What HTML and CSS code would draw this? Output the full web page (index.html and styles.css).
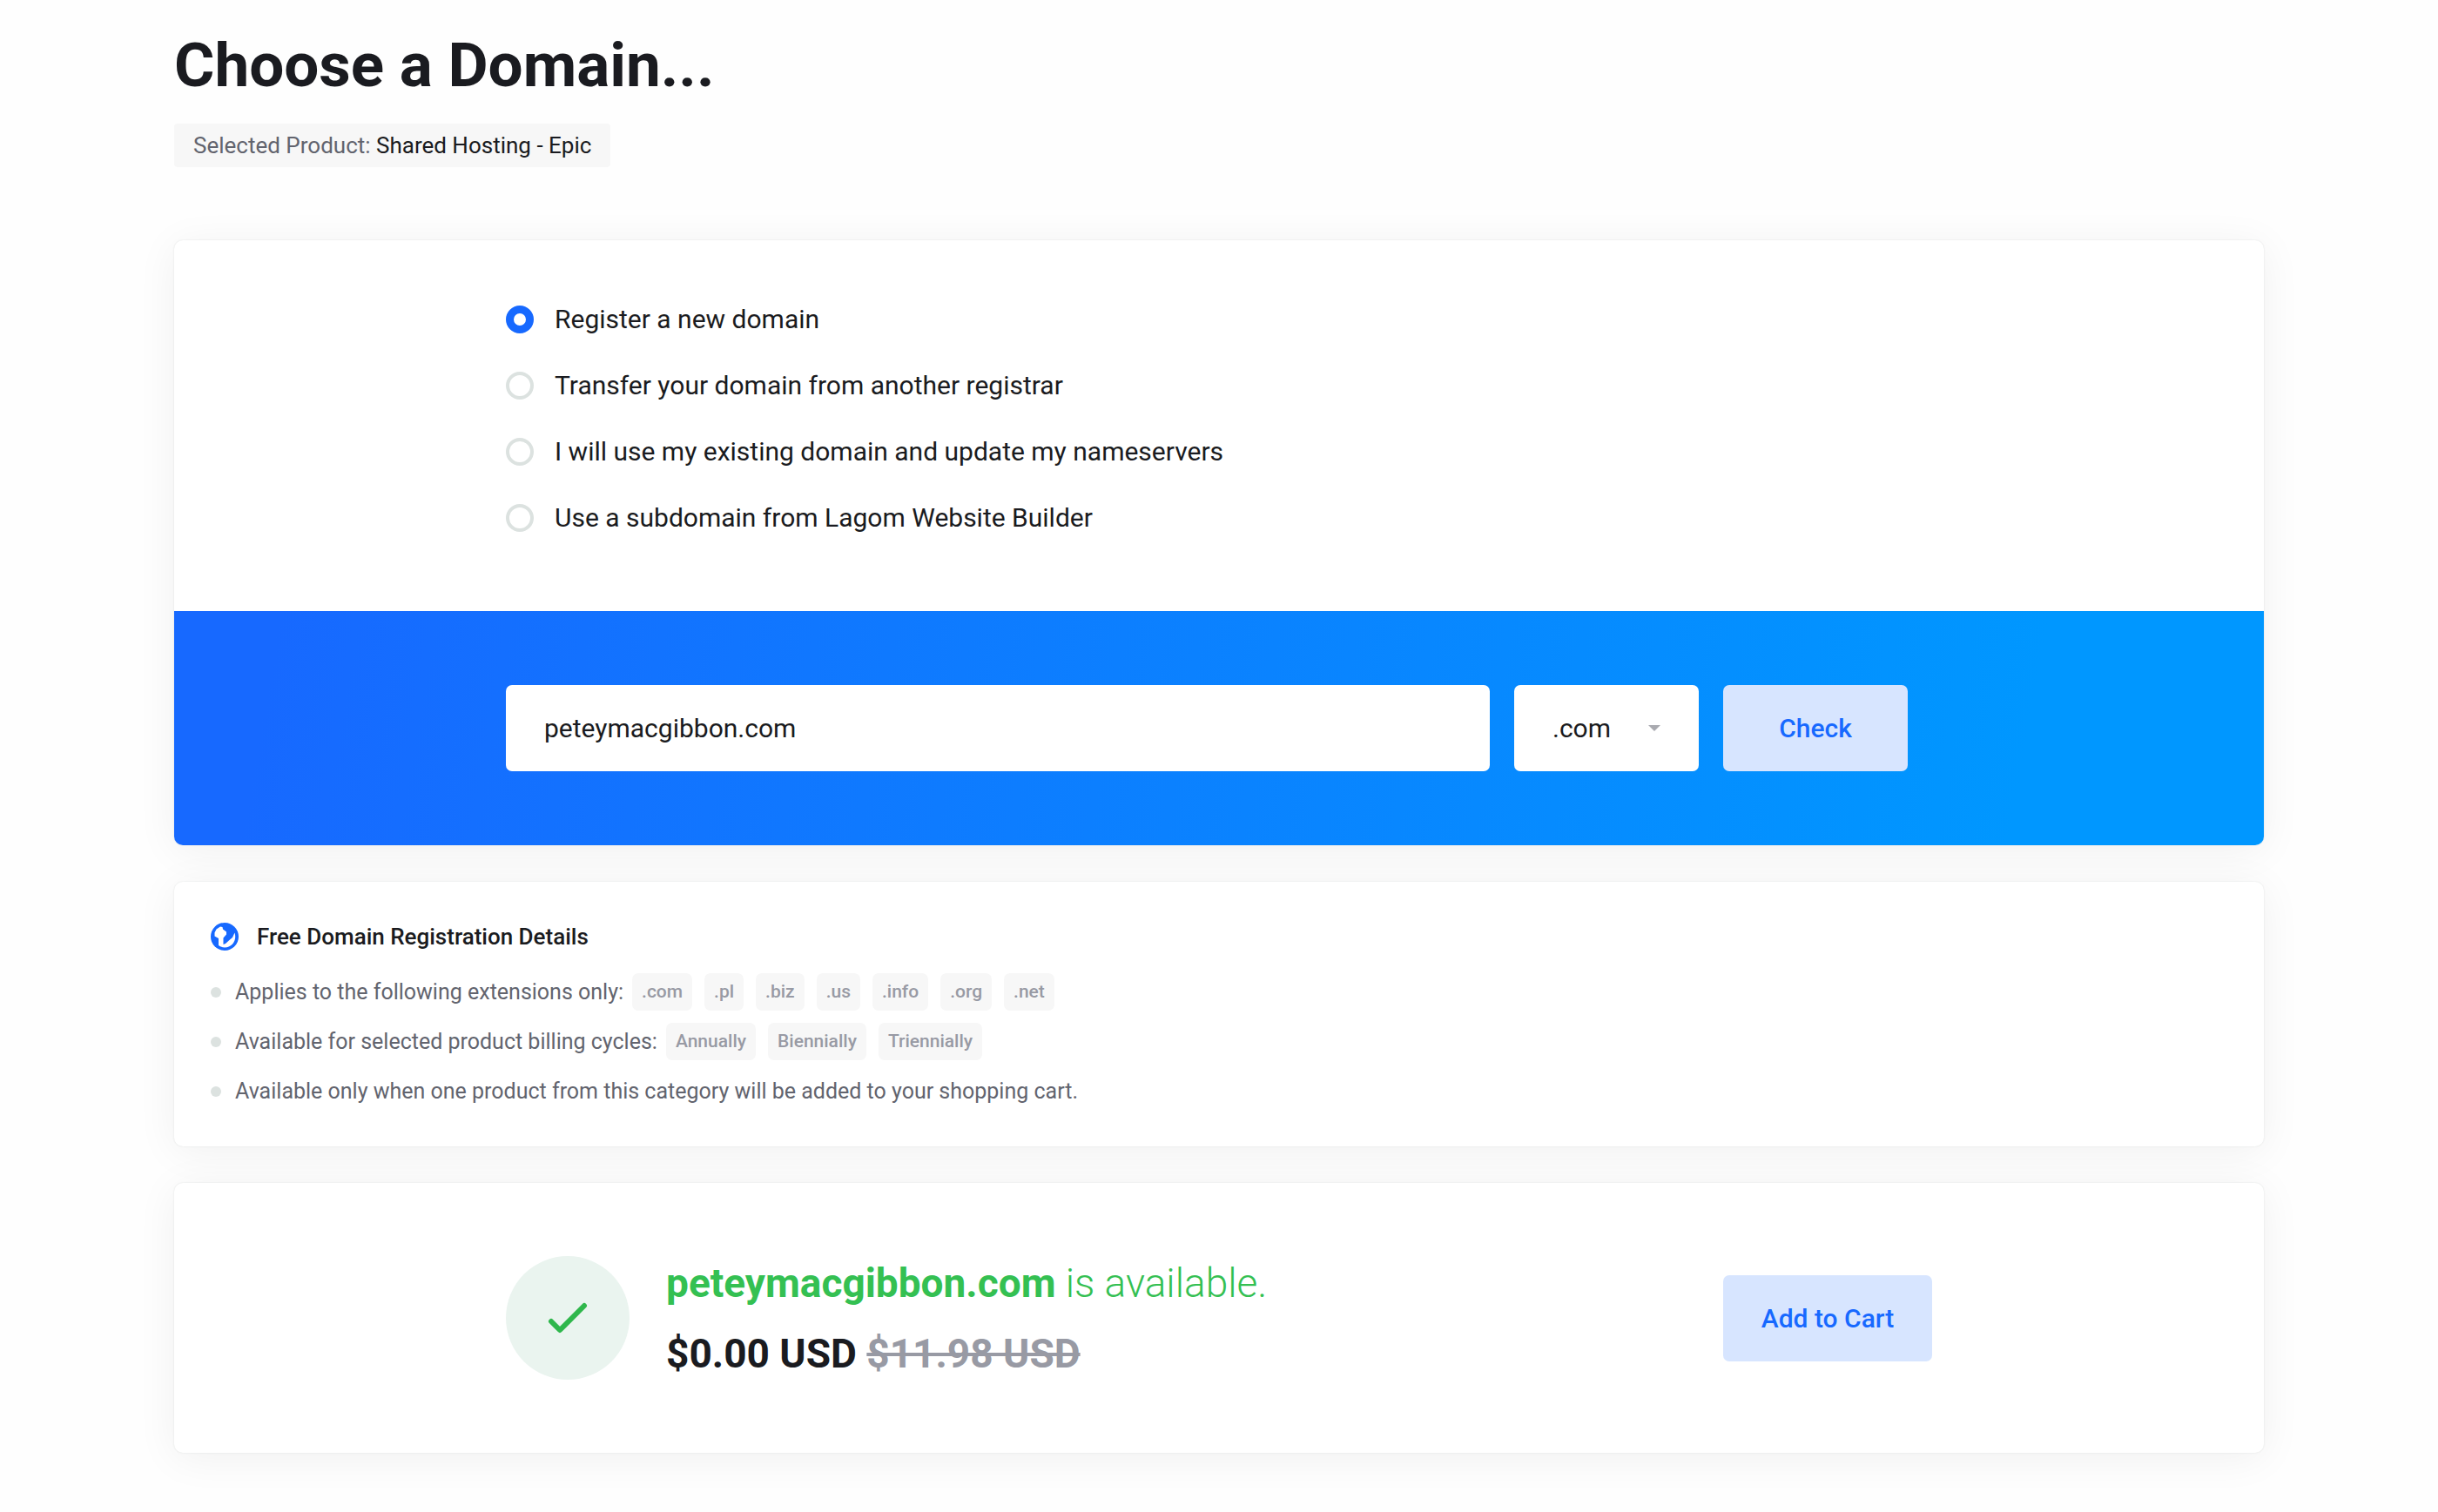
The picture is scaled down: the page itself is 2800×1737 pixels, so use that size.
FILE: index.html
```html
<!DOCTYPE html>
<html lang="en">
<head>
<meta charset="utf-8">
<meta name="viewport" content="width=device-width, initial-scale=1">
<title>Choose a Domain</title>
<link rel="stylesheet" href="styles.css">
</head>
<body>
<main class="page">
  <header class="page-header">
    <h1 class="page-title">Choose a Domain...</h1>
    <p class="product">Selected Product: <span class="product-name">Shared Hosting - Epic</span></p>
  </header>

  <form class="card search">
    <fieldset class="options content">
      <label class="option"><input class="radio" type="radio" name="domain-option" checked>Register a new domain</label>
      <label class="option"><input class="radio" type="radio" name="domain-option">Transfer your domain from another registrar</label>
      <label class="option"><input class="radio" type="radio" name="domain-option">I will use my existing domain and update my nameservers</label>
      <label class="option"><input class="radio" type="radio" name="domain-option">Use a subdomain from Lagom Website Builder</label>
    </fieldset>
    <div class="search-bar">
      <div class="search-row content">
        <input class="field" type="text" name="domain" value="peteymacgibbon.com" aria-label="Domain name">
        <select class="field tld" name="tld" aria-label="Extension">
          <option>.com</option>
        </select>
        <button class="button" type="submit">Check</button>
      </div>
    </div>
  </form>

  <section class="card details">
    <h2 class="details-title">
      <svg class="globe" viewBox="0 0 32 32" aria-hidden="true">
        <circle cx="16" cy="16" r="16" fill="#1769ff"/>
        <path fill="#fff" d="M4.500 11.500L6.500 7.500L11 4.500L13.500 5L14 7.500L18 10.500V13.500L14.500 17.500V25L17 24L22 19.500L25 17L27.500 11.500C30 19 26 28 16 28.500C13 28.500 10 27 9 26V18L4.500 15.500Z"/>
      </svg>
      Free Domain Registration Details
    </h2>
    <ul class="details-list">
      <li class="details-item">Applies to the following extensions only:
        <span class="tags"><span class="tag">.com</span><span class="tag">.pl</span><span class="tag">.biz</span><span class="tag">.us</span><span class="tag">.info</span><span class="tag">.org</span><span class="tag">.net</span></span>
      </li>
      <li class="details-item">Available for selected product billing cycles:
        <span class="tags"><span class="tag">Annually</span><span class="tag">Biennially</span><span class="tag">Triennially</span></span>
      </li>
      <li class="details-item">Available only when one product from this category will be added to your shopping cart.</li>
    </ul>
  </section>

  <section class="card result">
    <div class="result-row content">
      <span class="result-icon">
        <svg class="check" viewBox="0 0 46 36" aria-hidden="true"><path d="M4 22l10 10L42 4" fill="none" stroke="#2fb74c" stroke-width="6" stroke-linecap="round" stroke-linejoin="round"/></svg>
      </span>
      <div class="result-text">
        <p class="availability"><strong>peteymacgibbon.com</strong> is available.</p>
        <p class="price">$0.00 USD <s class="old-price">$11.98 USD</s></p>
      </div>
      <button class="button cart" type="button">Add to Cart</button>
    </div>
  </section>
</main>
</body>
</html>
```
FILE: styles.css
```css
* {
  box-sizing: border-box;
}

body {
  margin: 0;
  background: #fefefe;
  color: #1a1b20;
  font-family: Roboto, sans-serif;
  font-size: 30px;
}

h1, h2, p, ul, fieldset {
  margin: 0;
  padding: 0;
  border: 0;
}

.page {
  display: flex;
  flex-direction: column;
  gap: 42px;
  padding: 33px 200px 67px;
}

.page-header {
  display: flex;
  flex-direction: column;
  align-items: flex-start;
  gap: 25px;
  margin-bottom: 42px;
}

.page-title {
  font-size: 71px;
  font-weight: 700;
  line-height: 84px;
}

.product {
  padding: 0 22px;
  border-radius: 4px;
  background: #f7f7f7;
  color: #62646e;
  font-size: 26px;
  line-height: 50px;
}

.product-name {
  color: #1a1b20;
}

.card {
  border-radius: 10px;
  background: #fff;
  box-shadow: 0 0 2px rgba(20, 40, 30, 0.12), 0 6px 48px rgba(0, 0, 0, 0.06);
}

.content {
  width: 100%;
  max-width: 1638px;
  margin: 0 auto;
}

.options {
  display: flex;
  flex-direction: column;
  gap: 36px;
  padding: 71px 0 87px;
}

.option {
  display: flex;
  align-items: center;
  gap: 24px;
  line-height: 40px;
}

.radio {
  appearance: none;
  width: 32px;
  height: 32px;
  margin: 0;
  border: 4px solid #dce2e0;
  border-radius: 50%;
  background: #fff;
}

.radio:checked {
  border: 9px solid #1769ff;
}

.search-bar {
  padding: 85px 0;
  border-radius: 0 0 10px 10px;
  background: linear-gradient(100deg, #1769ff 5%, #0097ff 88%);
}

.search-row {
  display: grid;
  grid-template-columns: 1fr 212px 212px;
  gap: 28px;
  padding-right: 28px;
}

.field,
.button {
  height: 99px;
  margin: 0;
  border: 0;
  border-radius: 7px;
  font-family: inherit;
  font-size: 30px;
}

.field {
  min-width: 0;
  padding: 0 44px;
  background: #fff;
  color: #1a1b20;
}

.tld {
  appearance: none;
  background: #fff url("data:image/svg+xml,%3Csvg xmlns='http://www.w3.org/2000/svg' viewBox='0 0 14 7'%3E%3Cpath d='M0 0h14L7 7z' fill='%23a9aab0'/%3E%3C/svg%3E") no-repeat right 44px center / 14px 7px;
}

.button {
  background: #d7e5ff;
  color: #1769ff;
  font-weight: 500;
}

.details {
  padding: 42px;
}

.details-title {
  display: flex;
  align-items: center;
  gap: 21px;
  margin-bottom: 21px;
  font-size: 26px;
  font-weight: 500;
  line-height: 42px;
}

.globe {
  width: 32px;
  height: 32px;
}

.details-list {
  display: flex;
  flex-direction: column;
  gap: 14px;
  list-style: none;
}

.details-item {
  display: flex;
  align-items: center;
  color: #62646e;
  font-size: 25px;
  line-height: 43px;
}

.details-item::before {
  content: "";
  width: 12px;
  height: 12px;
  margin-right: 16px;
  border-radius: 50%;
  background: #dce2e0;
}

.tags {
  display: flex;
  gap: 14px;
  margin-left: 10px;
}

.tag {
  padding: 0 11px;
  border-radius: 7px;
  background: #f7f7f7;
  color: #989aa4;
  font-size: 21px;
  font-weight: 500;
}

.result {
  padding: 84px 0;
}

.result-row {
  display: flex;
  align-items: center;
  gap: 42px;
}

.result-icon {
  display: flex;
  align-items: center;
  justify-content: center;
  width: 142px;
  height: 142px;
  border-radius: 50%;
  background: #eaf4ef;
}

.check {
  width: 46px;
  height: 36px;
}

.result-text {
  flex: 1;
  font-size: 46px;
  line-height: 60px;
}

.availability {
  margin-bottom: 21px;
  color: #34c052;
  font-weight: 300;
}

.availability strong {
  font-weight: 700;
}

.price {
  font-weight: 700;
}

.old-price {
  color: #989aa4;
}

.cart {
  width: 240px;
}
```
